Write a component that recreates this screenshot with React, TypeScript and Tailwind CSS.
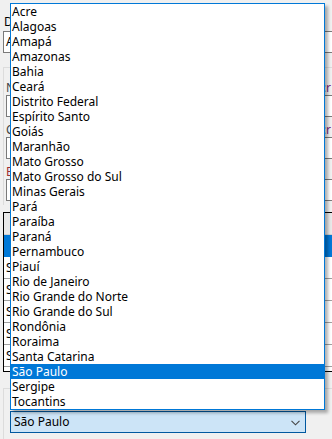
import React from "react";

const states = [
  "Acre",
  "Alagoas",
  "Amapá",
  "Amazonas",
  "Bahia",
  "Ceará",
  "Distrito Federal",
  "Espírito Santo",
  "Goiás",
  "Maranhão",
  "Mato Grosso",
  "Mato Grosso do Sul",
  "Minas Gerais",
  "Pará",
  "Paraíba",
  "Paraná",
  "Pernambuco",
  "Piauí",
  "Rio de Janeiro",
  "Rio Grande do Norte",
  "Rio Grande do Sul",
  "Rondônia",
  "Roraima",
  "Santa Catarina",
  "São Paulo",
  "Sergipe",
  "Tocantins",
];

const selected = "São Paulo";

function Input({ text }: { text?: string }) {
  return (
    <div className="h-[22px] w-[340px] border border-[#7a7a7a] bg-white pl-[2px] leading-[20px] text-black">
      {text}
    </div>
  );
}

export default function App() {
  return (
    <div className="relative w-[332px] h-[439px] overflow-hidden bg-[#f0f0f0] font-['Noto_Sans',sans-serif] text-[12px] text-black">
      {/* background form */}
      <div className="flex flex-col pl-[3px]">
        <div className="h-[31px] pt-[14px] pl-[1px] leading-[15px]">Dados</div>
        <Input text="Acre" />
        <div className="mt-[14px] h-[138px] w-[340px] border-t border-l border-[#dcdcdc] pt-[12px] pl-[2px] pr-[12px] flex flex-col">
          <div className="h-[15px] leading-[15px] flex justify-between text-[#444]">
            <span>Nome</span>
            <span>
              <span className="text-black">:</span>
              <span className="text-[#7b1f7b]">r</span>
            </span>
          </div>
          <Input />
          <div className="mt-[5px] h-[15px] leading-[15px] flex justify-between text-[#444]">
            <span>Cidade</span>
            <span>
              <span className="text-black">:</span>
              <span className="text-[#7b1f7b]">r</span>
            </span>
          </div>
          <Input />
          <div className="mt-[5px] h-[15px] leading-[15px] text-[#a03030]">Estado</div>
          <Input />
        </div>
        <div className="mt-[7px] h-[160px] w-[340px] border border-black bg-white overflow-hidden flex flex-col">
          <div className="h-[22px] shrink-0 bg-[#e8e8e8] border-b border-[#d0d0d0]" />
          <div className="h-[22px] shrink-0 bg-[#0078d7]" />
          {[0, 1, 2, 3, 4, 5].map((i) => (
            <div
              key={i}
              className="h-[22px] shrink-0 border-b border-[#a0a0a0] pl-[2px] leading-[21px]"
            >
              São Paulo
            </div>
          ))}
        </div>
        <div className="mt-[16px] h-[60px] w-[340px] border-t border-l border-[#dcdcdc] pt-[22px] pl-[6px]">
          <div className="h-[22px] w-[296px] border border-[#0058a0] bg-[#cce4f7] flex items-center justify-between pl-[3px] pr-[5px]">
            <span className="leading-[20px]">São Paulo</span>
            <svg width="9" height="6" viewBox="0 0 9 6" className="mt-[1px]">
              <path d="M0.5 0.8 L4.5 4.8 L8.5 0.8" fill="none" stroke="#444" strokeWidth="1.1" />
            </svg>
          </div>
        </div>
      </div>

      {/* dropdown list overlay */}
      <div className="absolute left-[10px] top-[3px] w-[315px] h-[407px] border border-[#0078d7] bg-white shadow-[3px_3px_3px_rgba(0,0,0,0.3)] flex flex-col">
        {states.map((s) => (
          <div
            key={s}
            className={
              s === selected
                ? "h-[15px] leading-[15px] pl-[1px] bg-[#0078d7] text-white whitespace-nowrap"
                : "h-[15px] leading-[15px] pl-[1px] text-black whitespace-nowrap"
            }
          >
            {s}
          </div>
        ))}
      </div>
    </div>
  );
}
